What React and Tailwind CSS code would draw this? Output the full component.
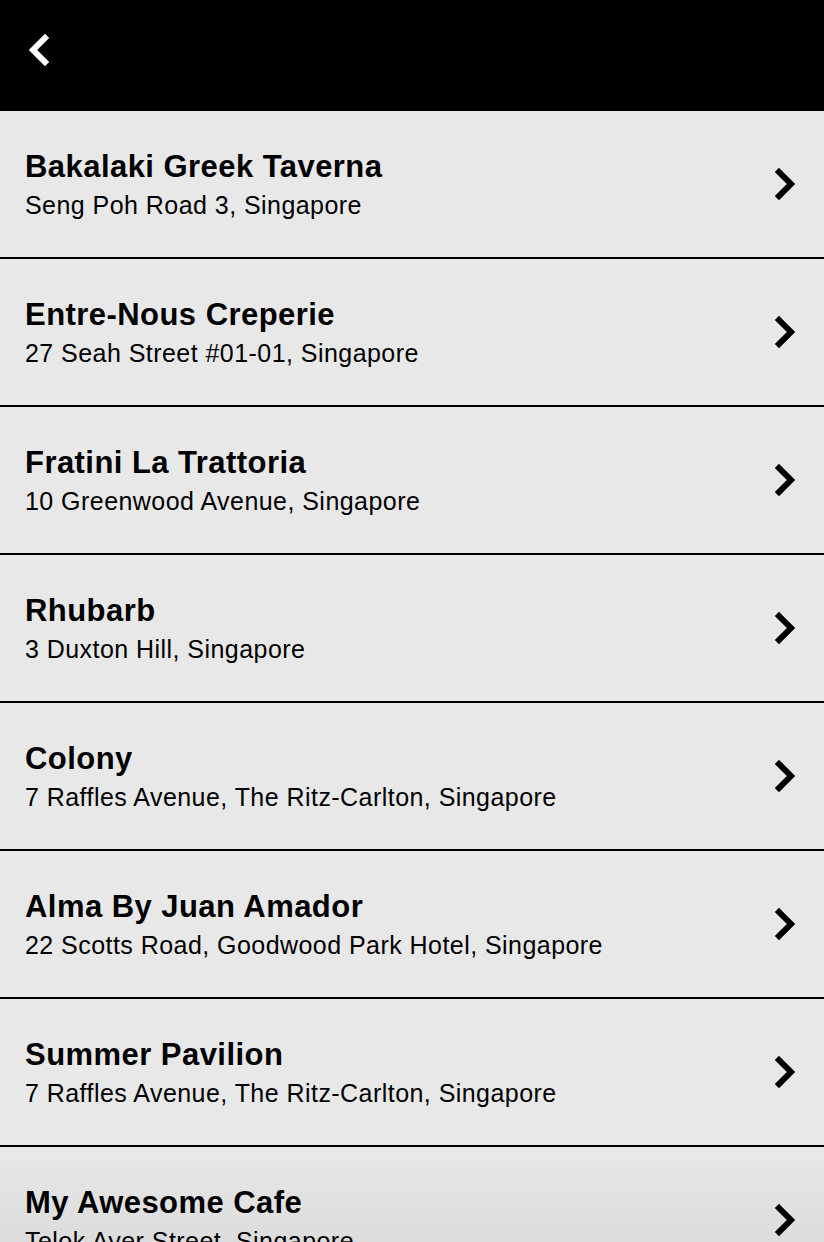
import React from "react";

const items = [
  ["Bakalaki Greek Taverna", "Seng Poh Road 3, Singapore"],
  ["Entre-Nous Creperie", "27 Seah Street #01-01, Singapore"],
  ["Fratini La Trattoria", "10 Greenwood Avenue, Singapore"],
  ["Rhubarb", "3 Duxton Hill, Singapore"],
  ["Colony", "7 Raffles Avenue, The Ritz-Carlton, Singapore"],
  ["Alma By Juan Amador", "22 Scotts Road, Goodwood Park Hotel, Singapore"],
  ["Summer Pavilion", "7 Raffles Avenue, The Ritz-Carlton, Singapore"],
  ["My Awesome Cafe", "Telok Ayer Street, Singapore"],
];

function Chevron({ dir = "right", color = "#000" }) {
  const pts = dir === "right" ? "6,6 18,18 6,30" : "18,6 6,18 18,30";
  return (
    <svg width="24" height="36" viewBox="0 0 24 36" fill="none">
      <polyline
        points={pts}
        stroke={color}
        strokeWidth="6"
        strokeLinecap="square"
        strokeLinejoin="miter"
      />
    </svg>
  );
}

export default function App() {
  return (
    <div
      className="w-[824px] h-[1242px] overflow-hidden bg-[#e8e8e8]"
      style={{ fontFamily: '"Liberation Sans", Arial, sans-serif' }}
    >
      <div className="h-[111px] bg-black flex items-start pl-[27px] pt-[32px]">
        <Chevron dir="left" color="#fff" />
      </div>
      {items.map(([t, s], i) => (
        <div
          key={i}
          className={
            "h-[148px] border-b-2 border-black flex items-center pl-[25px] pr-[27px] " +
            (i === items.length - 1
              ? "bg-linear-to-b from-[#e8e8e8] to-[#d6d6d6]"
              : "bg-[#e8e8e8]")
          }
        >
          <div className="flex-1 min-w-0">
            <div className="text-[31px] leading-[36px] font-bold text-black tracking-[0.45px] whitespace-nowrap">{t}</div>
            <div className="text-[25px] leading-[28px] text-black mt-[6px] tracking-[0.45px] whitespace-nowrap">{s}</div>
          </div>
          <Chevron />
        </div>
      ))}
    </div>
  );
}
